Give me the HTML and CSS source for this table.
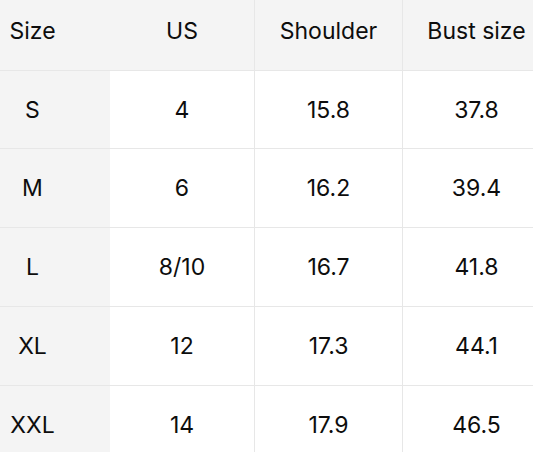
FILE: index.html
```html
<!DOCTYPE html>
<html>
<head>
<meta charset="utf-8">
<link rel="stylesheet" href="styles.css">
</head>
<body>
<div class="table">
  <div class="cell head first">Size</div>
  <div class="cell head">US</div>
  <div class="cell head line">Shoulder</div>
  <div class="cell head line">Bust size</div>

  <div class="cell first r1">S</div>
  <div class="cell body r1">4</div>
  <div class="cell body line r1">15.8</div>
  <div class="cell body line r1">37.8</div>

  <div class="cell first">M</div>
  <div class="cell body">6</div>
  <div class="cell body line">16.2</div>
  <div class="cell body line">39.4</div>

  <div class="cell first">L</div>
  <div class="cell body">8/10</div>
  <div class="cell body line">16.7</div>
  <div class="cell body line">41.8</div>

  <div class="cell first">XL</div>
  <div class="cell body">12</div>
  <div class="cell body line">17.3</div>
  <div class="cell body line">44.1</div>

  <div class="cell first">XXL</div>
  <div class="cell body">14</div>
  <div class="cell body line">17.9</div>
  <div class="cell body line">46.5</div>
</div>
</body>
</html>
```

FILE: styles.css
```css
html, body {
  margin: 0;
  padding: 0;
  background: #ffffff;
  overflow: hidden;
}
.table {
  display: grid;
  grid-template-columns: 110px 144px 148px 148px;
  grid-template-rows: 71px 78px 79px 79px 79px 79px;
  width: 550px;
  font-family: "Inter", "Liberation Sans", sans-serif;
  font-size: 23px;
  color: #0d0d0d;
}
.cell {
  box-sizing: border-box;
  display: flex;
  align-items: center;
  justify-content: center;
  white-space: nowrap;
  border-bottom: 1px solid #e7e7e7;
}
.head {
  background: #f4f4f4;
  padding-bottom: 8px;
}
.first {
  background: #f4f4f4;
  padding-left: 8px;
  padding-right: 53px;
}
.body {
  background: #ffffff;
}
.line {
  border-left: 1px solid #e7e7e7;
}
```
